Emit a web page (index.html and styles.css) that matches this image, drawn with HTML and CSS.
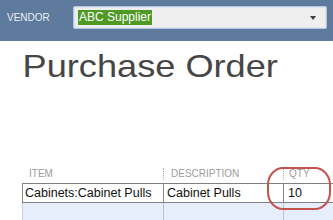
FILE: index.html
```html
<!DOCTYPE html>
<html>
<head>
<meta charset="utf-8">
<link rel="stylesheet" href="styles.css">
</head>
<body>
<header class="topbar">
  <span class="label">VENDOR</span>
  <div class="select">
    <span class="sel">ABC Supplier</span>
    <span class="arrow"></span>
  </div>
</header>
<h1 class="title">Purchase Order</h1>
<div class="grid">
  <div class="colhead">
    <div class="hc c1">ITEM</div>
    <div class="hc c2 sep">DESCRIPTION</div>
    <div class="hc c3 sep">QTY</div>
  </div>
  <div class="row filled">
    <div class="cell c1">Cabinets:Cabinet Pulls</div>
    <div class="cell c2">Cabinet Pulls</div>
    <div class="cell c3">10</div>
  </div>
  <div class="row blank">
    <div class="cell c1"></div>
    <div class="cell c2"></div>
    <div class="cell c3"></div>
  </div>
  <div class="mark"></div>
</div>
</body>
</html>
```
FILE: styles.css
```css
* { box-sizing: border-box; }
html, body { margin: 0; padding: 0; }
body {
  width: 333px;
  height: 220px;
  overflow: hidden;
  background: #ffffff;
  font-family: "Liberation Sans", Arial, sans-serif;
}
.topbar {
  height: 41px;
  background: #5e7b9d;
  display: flex;
  align-items: flex-start;
  padding-top: 6px;
}
.label {
  width: 73px;
  padding-left: 7px;
  padding-top: 6px;
  font-size: 10px;
  line-height: 12px;
  color: #e9eef5;
}
.select {
  width: 254px;
  height: 23px;
  background: #efefef;
  border: 1px solid #b4c6e0;
  border-radius: 2px;
  box-shadow: inset 0 0 0 1px #dfe6f0;
  display: flex;
  align-items: center;
  padding-left: 4px;
  padding-right: 10px;
  justify-content: space-between;
}
.sel {
  background: #4f9a24;
  color: #ffffff;
  font-size: 12px;
  line-height: 15px;
  padding: 0 1px;
}
.arrow {
  width: 0;
  height: 0;
  border-left: 3.5px solid transparent;
  border-right: 3.5px solid transparent;
  border-top: 4px solid #3c3c3c;
}
.title {
  width: 260px;
  margin: 7px 0 0 0;
  padding-left: 20px;
  font-weight: normal;
  font-size: 32px;
  line-height: 36px;
  color: #464646;
  white-space: nowrap;
  transform: scaleX(1.13);
  transform-origin: 0 0;
}
.grid {
  position: relative;
  margin-top: 81px;
  padding-left: 22px;
}
.colhead {
  display: flex;
  height: 18px;
  align-items: flex-end;
  padding-bottom: 3px;
}
.hc {
  font-size: 10px;
  line-height: 12px;
  color: #9c9c9c;
  padding-left: 7px;
}
.hc.sep { border-left: 1px dotted #a8a8a8; }
.c1 { width: 141px; }
.c2 { width: 120px; }
.c3 { flex: 1; }
.hc.c3 { padding-left: 5px; }
.row {
  display: flex;
}
.row.filled .cell {
  height: 20px;
  border-top: 1px solid #808080;
  border-bottom: 1px solid #808080;
}
.row.blank .cell {
  height: 20px;
  background: #e5eefa;
  border-left-color: #b9c2cc;
}
.cell {
  font-size: 12.5px;
  line-height: 18px;
  color: #111111;
  border-left: 1px solid #8a8a8a;
  padding-left: 2px;
  white-space: nowrap;
}
.cell.c2 { padding-left: 3px; }
.cell.c3 { padding-left: 4px; }
.row.blank .cell.c1 { border-left-color: #c7d0da; }
.mark {
  position: absolute;
  left: 267px;
  top: 2px;
  width: 64px;
  height: 43px;
  border: 2.5px solid #c4524d;
  border-radius: 16px / 18px;
}
```
